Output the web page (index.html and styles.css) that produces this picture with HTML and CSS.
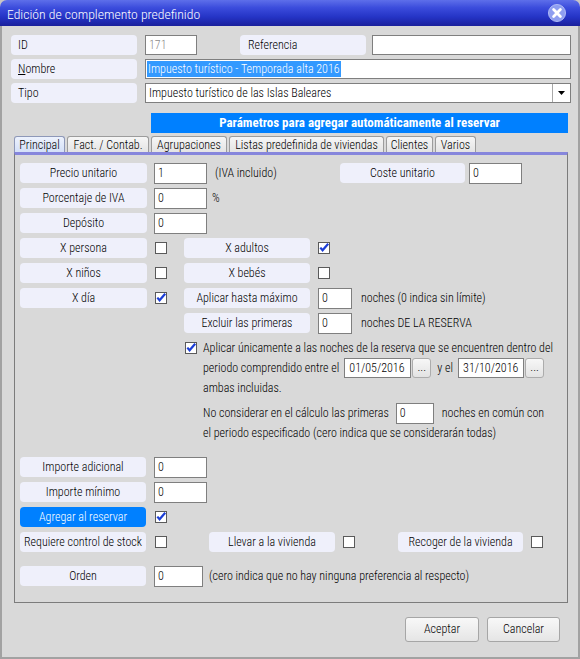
FILE: index.html
```html
<!DOCTYPE html>
<html lang="es">
<head>
<meta charset="utf-8">
<title>Edición de complemento predefinido</title>
<link rel="stylesheet" href="styles.css">
</head>
<body>
<div class="window">
  <div class="titlebar">
    <span class="title">Edición de complemento predefinido</span>
    <span class="close">
      <svg width="20" height="20" viewBox="0 0 20 20"><circle cx="10" cy="10" r="8.5" fill="#8e9ef0" stroke="#b0bbf6" stroke-width="1"/><path d="M6.6 6.6 L13.4 13.4 M13.4 6.6 L6.6 13.4" stroke="#ffffff" stroke-width="2.8" stroke-linecap="round"/></svg>
    </span>
  </div>
  <div class="client">
    <div class="frow">
      <div class="flabel">ID</div>
      <div class="finput w-id disabled">171</div>
      <div class="flabel ref">Referencia</div>
      <div class="finput w-ref"></div>
    </div>
    <div class="frow">
      <div class="flabel"><u>N</u>ombre</div>
      <div class="finput w-long"><span class="sel">Impuesto turístico - Temporada alta 2016</span></div>
    </div>
    <div class="frow">
      <div class="flabel">Tipo</div>
      <div class="finput w-long combo"><span class="combo-text">Impuesto turístico de las Islas Baleares</span><span class="combo-btn"><svg width="7" height="4" viewBox="0 0 7 4"><path d="M0 0 H7 L3.5 4 Z" fill="#000"/></svg></span></div>
    </div>

    <div class="banner">Parámetros para agregar automáticamente al reservar</div>

    <div class="tabs">
      <div class="tab active t1">Principal</div>
      <div class="tab t2">Fact. / Contab.</div>
      <div class="tab t3">Agrupaciones</div>
      <div class="tab t4">Listas predefinida de viviendas</div>
      <div class="tab t5">Clientes</div>
      <div class="tab t6">Varios</div>
    </div>

    <div class="panel">
      <div class="prow first">
        <div class="plabel">Precio unitario</div>
        <div class="pinput">1</div>
        <span class="ptext iva">(IVA incluido)</span>
        <div class="plabel coste">Coste unitario</div>
        <div class="pinput coste-in">0</div>
      </div>
      <div class="prow">
        <div class="plabel">Porcentaje de IVA</div>
        <div class="pinput">0</div>
        <span class="ptext pct">%</span>
      </div>
      <div class="prow">
        <div class="plabel">Depósito</div>
        <div class="pinput">0</div>
      </div>
      <div class="prow">
        <div class="plabel">X persona</div>
        <span class="cb"></span>
        <div class="plabel right">X adultos</div>
        <span class="cb checked"><svg width="12" height="12" viewBox="0 0 12 12"><path d="M2.3 5.6 L4.6 8.3 L10.2 1.8" fill="none" stroke="#1c3ed6" stroke-width="2.2"/></svg></span>
      </div>
      <div class="prow">
        <div class="plabel">X niños</div>
        <span class="cb"></span>
        <div class="plabel right">X bebés</div>
        <span class="cb"></span>
      </div>
      <div class="prow">
        <div class="plabel">X día</div>
        <span class="cb checked"><svg width="12" height="12" viewBox="0 0 12 12"><path d="M2.3 5.6 L4.6 8.3 L10.2 1.8" fill="none" stroke="#1c3ed6" stroke-width="2.2"/></svg></span>
        <div class="plabel right">Aplicar hasta máximo</div>
        <div class="pinput small">0</div>
        <span class="ptext after">noches (0 indica sin límite)</span>
      </div>
      <div class="prow">
        <div class="plabel indent">Excluir las primeras</div>
        <div class="pinput small">0</div>
        <span class="ptext after">noches DE LA RESERVA</span>
      </div>

      <div class="period">
        <div class="pline">
          <span class="cb checked"><svg width="12" height="12" viewBox="0 0 12 12"><path d="M2.3 5.6 L4.6 8.3 L10.2 1.8" fill="none" stroke="#1c3ed6" stroke-width="2.2"/></svg></span>
          <span class="ptext lead">Aplicar únicamente a las noches de la reserva que se encuentren dentro del</span>
        </div>
        <div class="pline sub">
          <span class="ptext">periodo comprendido entre el</span>
          <div class="pinput date d1">01/05/2016</div>
          <div class="dots">...</div>
          <span class="ptext yel">y el</span>
          <div class="pinput date d2">31/10/2016</div>
          <div class="dots">...</div>
        </div>
        <div class="pline sub">
          <span class="ptext">ambas incluidas.</span>
        </div>
        <div class="pline sub gap">
          <span class="ptext">No considerar en el cálculo las primeras</span>
          <div class="pinput nc">0</div>
          <span class="ptext after2">noches en común con</span>
        </div>
        <div class="pline sub">
          <span class="ptext">el periodo especificado (cero indica que se considerarán todas)</span>
        </div>
      </div>

      <div class="prow sect">
        <div class="plabel l2">Importe adicional</div>
        <div class="pinput i2">0</div>
      </div>
      <div class="prow">
        <div class="plabel l2">Importe mínimo</div>
        <div class="pinput i2">0</div>
      </div>
      <div class="prow">
        <div class="plabel l2 blue">Agregar al reservar</div>
        <span class="cb checked c2"><svg width="12" height="12" viewBox="0 0 12 12"><path d="M2.3 5.6 L4.6 8.3 L10.2 1.8" fill="none" stroke="#1c3ed6" stroke-width="2.2"/></svg></span>
      </div>
      <div class="prow">
        <div class="plabel l2">Requiere control de stock</div>
        <span class="cb c2"></span>
        <div class="plabel l2 llevar">Llevar a la vivienda</div>
        <span class="cb"></span>
        <div class="plabel l3 recoger">Recoger de la vivienda</div>
        <span class="cb"></span>
      </div>
      <div class="prow sect">
        <div class="plabel l2">Orden</div>
        <div class="pinput i2 orden">0</div>
        <span class="ptext after3">(cero indica que no hay ninguna preferencia al respecto)</span>
      </div>
    </div>

    <div class="footer">
      <div class="btn aceptar">Aceptar</div>
      <div class="btn cancelar">Cancelar</div>
    </div>
  </div>
</div>
</body>
</html>
```
FILE: styles.css
```css
* { box-sizing: border-box; }
html, body { margin: 0; padding: 0; }
body {
  width: 580px;
  height: 659px;
  overflow: hidden;
  background: #c9c5c5;
  font-family: Roboto, "Liberation Sans", Arial, sans-serif;
  font-stretch: 75%;
  font-size: 12px;
  font-weight: 350;
  color: #000;
}
.window {
  width: 580px;
  height: 659px;
  display: flex;
  flex-direction: column;
  border-radius: 7px 7px 0 0;
  overflow: hidden;
}
.titlebar {
  height: 26px;
  flex: none;
  display: flex;
  align-items: center;
  justify-content: space-between;
  padding: 0 13px 0 7px;
  background: linear-gradient(to bottom, #5e6fea 0%, #3b4cdc 30%, #2534c6 65%, #1a209c 100%);
  color: #fff;
}
.title { font-size: 13.7px; padding-top: 1px; }
.close { display: flex; width: 20px; height: 20px; }
.client {
  flex: 1;
  background: #d9d9d9;
  border: 2px solid #a2a2a2;
  border-top: 0;
  padding-top: 9px;
  display: flex;
  flex-direction: column;
}

/* top fields */
.frow { display: flex; height: 20px; margin-left: 9px; }
.frow + .frow { margin-top: 4px; }
.flabel {
  width: 126px;
  height: 20px;
  background: #eff0fb;
  border-radius: 4px;
  padding-left: 7px;
  line-height: 20px;
}
.flabel.ref { margin-left: 43px; padding-left: 8px; }
.finput {
  height: 20px;
  margin-left: 8px;
  background: #fff;
  border: 1px solid #7f7f7f;
  padding-left: 3px;
  line-height: 18px;
  white-space: nowrap;
  overflow: hidden;
}
.finput.disabled { color: #8a8a8a; }
.w-id { width: 52px; }
.w-ref { width: 199px; margin-left: 6px; }
.w-long { width: 426px; padding-left: 1px; }
.sel {
  display: inline-block;
  background: #3399ff;
  color: #fff;
  line-height: 16px;
  padding: 0 1px;
  margin-top: 1px;
  vertical-align: top;
}
.combo { display: flex; justify-content: space-between; padding-left: 3px; }
.combo-btn {
  width: 18px;
  height: 18px;
  border-left: 1px solid #a8a8a8;
  display: flex;
  align-items: center;
  justify-content: center;
}

.banner {
  margin: 10px 0 0 149px;
  width: 417px;
  height: 20px;
  background: #0080ff;
  color: #fff;
  font-weight: 700;
  font-size: 13px;
  text-align: center;
  line-height: 20px;
}

/* tabs */
.tabs { display: flex; gap: 2px; margin: 3px 0 0 12px; height: 16px; }
.tab {
  height: 16px;
  border: 1px solid #9c9c9c;
  border-bottom: 0;
  border-radius: 3px 3px 0 0;
  background: linear-gradient(to bottom, #f6f6f6, #e4e4e4);
  text-align: center;
  line-height: 16px;
  white-space: nowrap;
}
.tab.active { background: linear-gradient(to bottom, #edf2fd, #d4e0f8); border-color: #8e98b8; }
.t1 { width: 51px; }
.t2 { width: 82px; }
.t3 { width: 76px; }
.t4 { width: 155px; }
.t5 { width: 47px; }
.t6 { width: 41px; }

.panel {
  margin-left: 12px;
  width: 554px;
  height: 451px;
  border: 1px solid #7c7c7c;
  border-top: 3px solid #8686dc;
  padding-left: 5px;
  padding-top: 8px;
}
.prow { display: flex; align-items: center; height: 20px; margin-top: 5px; }
.prow.first { margin-top: 0; }
.prow.sect { margin-top: 14px; }
.plabel {
  width: 127px;
  height: 20px;
  flex: none;
  background: #eff0fb;
  border-radius: 4px;
  text-align: center;
  line-height: 20px;
  white-space: nowrap;
}
.plabel.right { width: 126px; margin-left: 17px; }
.plabel.indent { width: 126px; margin-left: 164px; }
.plabel.coste { width: 125px; }
.plabel.l2 { width: 126px; }
.plabel.l3 { width: 125px; }
.plabel.blue { background: #0080ff; color: #fff; }
.plabel.llevar { margin-left: 42px; }
.plabel.recoger { margin-left: 43px; }
.pinput {
  flex: none;
  width: 53px;
  height: 21px;
  margin-left: 7px;
  background: #fff;
  border: 1px solid #7f7f7f;
  padding-left: 3px;
  line-height: 19px;
  white-space: nowrap;
}
.pinput.i2 { margin-left: 8px; }
.pinput.small { width: 34px; margin-left: 8px; }
.pinput.orden { width: 49px; }
.pinput.coste-in { margin-left: 4px; }
.ptext { white-space: nowrap; line-height: 20px; }
.ptext.iva { width: 125px; margin-left: 8px; flex: none; }
.ptext.pct { margin-left: 5px; }
.ptext.after { margin-left: 9px; }
.ptext.after3 { margin-left: 6px; }
.cb {
  flex: none;
  width: 12px;
  height: 12px;
  margin-left: 8px;
  background: #fff;
  border: 1px solid #5a5a5a;
  position: relative;
}
.cb.c2 { margin-left: 9px; }
.cb svg { position: absolute; left: -1px; top: -1px; }

.period { margin: 5px 0 0 165px; }
.pline { display: flex; align-items: center; height: 20px; }
.pline .cb { margin-left: 0; }
.ptext.lead { margin-left: 6px; }
.pline.sub { padding-left: 18px; }
.pline.gap { margin-top: 5px; }
.pinput.date { width: 67px; height: 20px; margin-left: 5px; padding-left: 4px; }
.pinput.d2 { width: 66px; margin-left: 5px; }
.dots {
  flex: none;
  width: 19px;
  height: 20px;
  margin-left: 1px;
  border: 1px solid #acacac;
  border-radius: 3px;
  background: linear-gradient(to bottom, #f7f7f7, #e3e3e3);
  text-align: center;
  line-height: 16px;
}
.ptext.yel { margin-left: 6px; }
.pinput.nc { width: 38px; margin-left: 7px; }
.ptext.after2 { margin-left: 8px; }

.footer {
  display: flex;
  justify-content: flex-end;
  gap: 8px;
  margin: 14px 18px 0 0;
}
.btn {
  height: 25px;
  border: 1px solid #a6a6a6;
  border-radius: 3px;
  background: linear-gradient(to bottom, #f8f8f8, #e5e5e5);
  text-align: center;
  line-height: 23px;
}
.aceptar { width: 74px; }
.cancelar { width: 73px; }
```
